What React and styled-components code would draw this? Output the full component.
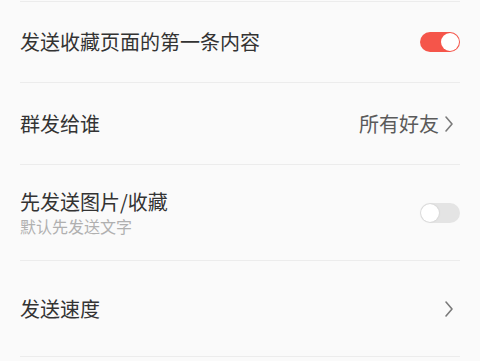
import React from "react";
import styled, { createGlobalStyle } from "styled-components";

const Global = createGlobalStyle`
  html, body { margin: 0; padding: 0; background: #fafafa; }
  body { font-family: "Noto Sans CJK SC", "Noto Sans", sans-serif; }
`;

const Page = styled.div`
  width: 480px;
  height: 361px;
  overflow: hidden;
  background: #fafafa;
  padding: 1px 20px 0;
  box-sizing: border-box;
`;

const Divider = styled.div`
  height: 1px;
  background: #ececec;
`;

const Row = styled.div`
  height: ${(p) => p.$h}px;
  display: flex;
  align-items: center;
  justify-content: space-between;
  border-bottom: 1px solid #ececec;
  box-sizing: content-box;
`;

const TextCol = styled.div`
  display: flex;
  flex-direction: column;
  gap: 2px;
`;

const Title = styled.div`
  font-size: 20px;
  line-height: 24px;
  color: #333;
`;

const Sub = styled.div`
  font-size: 16px;
  line-height: 20px;
  color: #b0b0b0;
`;

const Right = styled.div`
  display: flex;
  align-items: center;
  gap: 5px;
  font-size: 20px;
  line-height: 24px;
  color: #5a5a5a;
`;

const Toggle = styled.div`
  width: 40px;
  height: 20px;
  border-radius: 10px;
  background: ${(p) => (p.$on ? "#f5554a" : "#e4e4e4")};
  position: relative;
  &::after {
    content: "";
    position: absolute;
    top: 1px;
    ${(p) => (p.$on ? "right: 1px;" : "left: 1px;")}
    width: 18px;
    height: 18px;
    border-radius: 50%;
    background: #fff;
    box-shadow: ${(p) => (p.$on ? "none" : "0 0 2px rgba(0,0,0,0.15)")};
  }
`;

const Chevron = () => (
  <svg width="10" height="18" viewBox="0 0 10 18">
    <path d="M2 2 L8 9 L2 16" fill="none" stroke="#7a7a7a" strokeWidth="1.6" strokeLinecap="round" strokeLinejoin="round" />
  </svg>
);

const ChevWrap = styled.span`
  display: flex;
  align-items: center;
  margin-right: ${(p) => p.$mr}px;
`;

export default function App() {
  return (
    <>
      <Global />
      <Page>
        <Divider />
        <Row $h={80}>
          <Title>发送收藏页面的第一条内容</Title>
          <Toggle $on />
        </Row>
        <Row $h={81}>
          <Title>群发给谁</Title>
          <Right>
            所有好友
            <ChevWrap $mr={6}>
              <Chevron />
            </ChevWrap>
          </Right>
        </Row>
        <Row $h={95}>
          <TextCol>
            <Title>先发送图片/收藏</Title>
            <Sub>默认先发送文字</Sub>
          </TextCol>
          <Toggle />
        </Row>
        <Row $h={95}>
          <Title>发送速度</Title>
          <ChevWrap $mr={6}>
            <Chevron />
          </ChevWrap>
        </Row>
      </Page>
    </>
  );
}
